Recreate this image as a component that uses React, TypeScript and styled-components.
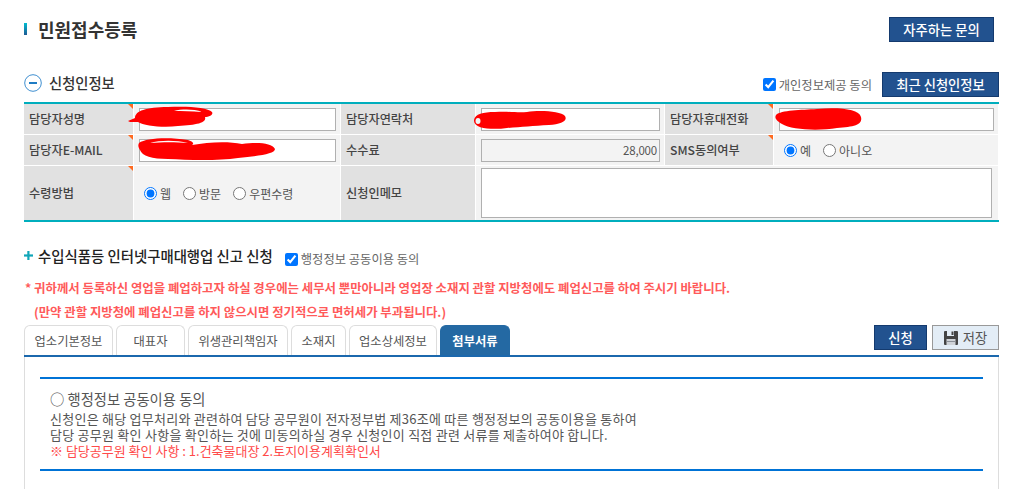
import React from "react"
import styled, { createGlobalStyle } from "styled-components"

const GlobalStyle = createGlobalStyle`
    html, body {
        margin: 0;
        padding: 0;
        background: #fff;
        overflow: hidden;
    }
    body {
        font-family: "Noto Sans CJK KR", "Noto Sans", sans-serif;
        font-size: 12px;
        color: #333;
    }
`

const Page = styled.div`
    width: 1018px;
    height: 489px;
    padding: 17px 19px 0 24px;
    box-sizing: border-box;
    overflow: hidden;
`

const TitleRow = styled.div`
    display: flex;
    justify-content: space-between;
    align-items: flex-start;
    height: 55px;
    padding-right: 5px;
`

const PageTitle = styled.h1`
    display: flex;
    align-items: center;
    column-gap: 11px;
    margin: 0;
    height: 23px;
    font-size: 18px;
    font-weight: 700;
    color: #333;

    &::before {
        content: "";
        width: 3px;
        height: 12px;
        background: linear-gradient(#00bcd0, #1f5a94);
    }
`

const NavyButton = styled.button<{ $w: number; $left?: number }>`
    width: ${(p) => p.$w}px;
    height: 25px;
    margin-left: ${(p) => p.$left ?? 0}px;
    padding: 0;
    box-sizing: border-box;
    border: 1px solid #143a6e;
    background: #22528f;
    color: #fff;
    font-family: inherit;
    font-size: 13.3px;
    font-weight: 500;
    line-height: 21px;
`

const SaveButton = styled.button`
    display: flex;
    align-items: center;
    justify-content: center;
    column-gap: 5px;
    width: 67px;
    height: 25px;
    padding: 0;
    box-sizing: border-box;
    border: 1px solid #999;
    background: #e3edf6;
    color: #555;
    font-family: inherit;
    font-size: 13.3px;
`

const SectionRow = styled.div`
    display: flex;
    align-items: center;
    height: 25px;
`

const SectionHeading = styled.div`
    display: flex;
    align-items: center;
    column-gap: 7px;
    margin-bottom: 4px;
`

const SectionTitle = styled.h2`
    margin: 0;
    font-size: 14.3px;
    font-weight: 500;
    color: #333;
`

const Agree = styled.label<{ $left?: number }>`
    display: flex;
    align-items: center;
    column-gap: 3px;
    margin-left: ${(p) => p.$left ?? 0}px;
    font-size: 12.3px;
    color: #666;
`

const ApplyAgree = styled(Agree)`
    margin-top: 4px;
`

const Check = styled.input.attrs({ type: "checkbox", defaultChecked: true })`
    width: 13px;
    height: 13px;
    margin: 0;
    accent-color: #0075ff;
`

const Spacer = styled.div`
    flex: 1;
`

const InfoGrid = styled.div`
    display: grid;
    grid-template-columns: 109px 206px 134px 188px 108px 224px;
    grid-template-rows: 30px 30px 54px;
    gap: 1px;
    margin-top: 5px;
    padding-right: 1px;
    border-top: 2px solid #00aebd;
    border-bottom: 2px solid #00aebd;
    width: 975px;
    box-sizing: border-box;
    background: #fff;
`

const Head = styled.div<{ $mark?: boolean }>`
    position: relative;
    display: flex;
    align-items: center;
    padding-left: 5px;
    background: #e1e1e1;
    font-size: 12.2px;
    font-weight: 500;
    color: #444;

    ${(p) =>
        p.$mark &&
        `&::after {
            content: "";
            position: absolute;
            top: 0;
            right: 0;
            border-top: 5px solid #ff6a20;
            border-left: 5px solid transparent;
        }`}
`

const Cell = styled.div`
    position: relative;
    display: flex;
    align-items: center;
    padding-left: 5px;
    background: #f3f3f3;
    min-width: 0;
`

const TextBox = styled.input<{ $w: number }>`
    width: ${(p) => p.$w}px;
    height: 23px;
    box-sizing: border-box;
    margin: 0;
    padding: 0 2px;
    border: 1px solid #b0b0b0;
    background: #fff;
    font-family: inherit;
    font-size: 12px;
    color: #555;

    &:read-only {
        background: #f3f3f3;
        text-align: right;
        font-size: 11.5px;
        letter-spacing: -0.2px;
    }
`

const Memo = styled.textarea`
    width: 511px;
    height: 50px;
    box-sizing: border-box;
    margin: 0;
    padding: 0;
    border: 1px solid #b0b0b0;
    background: #fff;
    resize: none;
`

const WideCell = styled(Cell)`
    grid-column: span 3;
`

const RadioGroup = styled.div<{ $pad: number }>`
    display: flex;
    align-items: center;
    column-gap: 12px;
    padding-left: ${(p) => p.$pad}px;
    font-size: 12px;
    color: #555;
`

const RadioLabel = styled.label`
    display: flex;
    align-items: center;
    column-gap: 3px;
`

const Radio = styled.input.attrs({ type: "radio" })`
    width: 13px;
    height: 13px;
    margin: 0;
    accent-color: #0075ff;
`

const Scribble = styled.svg<{ $x: number; $y: number }>`
    position: absolute;
    left: ${(p) => p.$x}px;
    top: ${(p) => p.$y}px;
    overflow: visible;
    pointer-events: none;
`

const ApplyRow = styled.div`
    display: flex;
    align-items: center;
    margin-top: 23px;
    height: 24px;
`

const ApplyHeading = styled.div`
    display: flex;
    align-items: center;
    column-gap: 5px;
    margin-bottom: 3px;
`

const ApplyTitle = styled.h2`
    margin: 0;
    font-size: 14.4px;
    font-weight: 500;
    color: #222;
`

const Notice = styled.p<{ $indent?: number }>`
    margin: 0;
    height: 24px;
    padding-left: ${(p) => p.$indent ?? 1}px;
    font-size: 12.4px;
    line-height: 24px;
    font-weight: 700;
    color: #ff5a5a;
`

const Notices = styled.div`
    margin-top: 7px;
    margin-bottom: 1px;
`

const TabBar = styled.div`
    display: flex;
    align-items: flex-start;
    height: 30px;
    border-bottom: 2px solid #1b68ad;
    width: 975px;
`

const Tab = styled.div<{ $w: number; $active?: boolean }>`
    display: flex;
    align-items: center;
    justify-content: center;
    box-sizing: border-box;
    width: ${(p) => p.$w}px;
    height: 30px;
    margin-right: 3px;
    border: 1px solid ${(p) => (p.$active ? "#2469a3" : "#ddd")};
    border-bottom: 0;
    border-radius: 6px 6px 0 0;
    background: ${(p) => (p.$active ? "#2469a3" : "#fff")};
    color: ${(p) => (p.$active ? "#fff" : "#555")};
    font-size: 12.3px;
    font-weight: ${(p) => (p.$active ? 700 : 400)};
`

const TabActions = styled.div`
    display: flex;
    column-gap: 5px;
    margin-left: auto;
`

const Panel = styled.div`
    width: 975px;
    height: 140px;
    box-sizing: border-box;
    padding: 20px 15px 0;
    border-left: 1px solid #ddd;
    border-right: 1px solid #ddd;
`

const Consent = styled.div`
    width: 943px;
    height: 94px;
    box-sizing: border-box;
    padding: 9px 10px 0;
    border-top: 2px solid #0073d6;
    border-bottom: 2px solid #0073d6;
    color: #555;
`

const ConsentTitle = styled.div`
    height: 23px;
    font-size: 14.3px;
    line-height: 22px;
`

const ConsentLine = styled.div<{ $red?: boolean }>`
    height: 16px;
    font-size: 13px;
    line-height: 16px;
    letter-spacing: ${(p) => (p.$red ? 0 : 0.25)}px;
    color: ${(p) => (p.$red ? "#ff4a4a" : "#555")};
    white-space: nowrap;
`

const MinusIcon = () => (
    <svg width="18" height="18" viewBox="0 0 18 18" aria-hidden="true">
        <circle cx="9" cy="9" r="8.3" fill="none" stroke="#3f8fd0" strokeWidth="1" />
        <rect x="5" y="8" width="8" height="2" fill="#1f7cc4" />
    </svg>
)

const PlusIcon = () => (
    <svg width="9" height="9" viewBox="0 0 9 9" aria-hidden="true">
        <rect x="3.3" y="0" width="2.2" height="9" fill="#11a6b8" />
        <rect x="0" y="3.4" width="9" height="2.2" fill="#11a6b8" />
    </svg>
)

const FloppyIcon = () => (
    <svg width="14" height="14" viewBox="0 0 14 14" aria-hidden="true">
        <rect x="0" y="0" width="14" height="14" rx="1" fill="#444" />
        <rect x="3" y="0" width="7" height="5" fill="#e3edf6" />
        <rect x="7.5" y="0.5" width="2" height="3.5" fill="#444" />
        <rect x="2.5" y="8" width="9" height="6" fill="#cfd3d8" />
        <rect x="2.5" y="10" width="9" height="1" fill="#8a8f96" />
    </svg>
)

const RED = "#ff0000"

const App = () => {
    return (
        <Page>
            <GlobalStyle />
            <TitleRow>
                <PageTitle>민원접수등록</PageTitle>
                <NavyButton $w={105}>자주하는 문의</NavyButton>
            </TitleRow>

            <SectionRow>
                <SectionHeading>
                    <MinusIcon />
                    <SectionTitle>신청인정보</SectionTitle>
                </SectionHeading>
                <Spacer />
                <Agree>
                    <Check />
                    개인정보제공 동의
                </Agree>
                <NavyButton $w={117} $left={10}>
                    최근 신청인정보
                </NavyButton>
            </SectionRow>

            <InfoGrid>
                <Head $mark>담당자성명</Head>
                <Cell>
                    <TextBox $w={197} />
                    <Scribble $x={-6} $y={2} width="86" height="22" viewBox="0 0 86 22">
                        <path
                            d="M0 15 L7 12 C7 5 18 1 40 1 C58 0 80 1 84 6 C86 9 80 11 77 11 C79 17 68 19 50 20 C36 22 16 20 10 16 L2 16 Z"
                            fill={RED}
                        />
                        <path d="M46 5 C54 3 66 3 74 6 C64 5 54 5 46 5 Z" fill="#fff" />
                    </Scribble>
                </Cell>
                <Head>담당자연락처</Head>
                <Cell>
                    <TextBox $w={179} />
                    <Scribble $x={-3} $y={6} width="94" height="20" viewBox="0 0 94 20">
                        <path
                            d="M1 10 C2 4 10 2 22 2 C36 1 44 3 54 2 C66 0 88 1 92 6 C95 11 88 14 76 15 C60 16 48 17 34 18 C20 20 0 19 1 10 Z"
                            fill={RED}
                        />
                        <ellipse cx="5" cy="11" rx="2.5" ry="3" fill="#f3f3f3" />
                    </Scribble>
                </Cell>
                <Head $mark>담당자휴대전화</Head>
                <Cell>
                    <TextBox $w={215} />
                    <Scribble $x={1} $y={4} width="87" height="22" viewBox="0 0 87 22">
                        <path
                            d="M1 7 C6 2 26 2 42 1 C64 -1 84 1 86 9 C88 17 78 19 62 20 C44 23 16 22 7 16 C2 13 -1 10 1 7 Z"
                            fill={RED}
                        />
                    </Scribble>
                </Cell>

                <Head $mark>담당자E-MAIL</Head>
                <Cell>
                    <TextBox $w={197} />
                    <Scribble $x={4} $y={3} width="138" height="22" viewBox="0 0 138 22">
                        <path
                            d="M1 5 C8 0 30 -1 50 2 C56 4 56 6 54 7 C70 4 90 3 104 6 C120 4 134 5 137 11 C137 16 120 18 100 20 C80 23 50 22 30 21 C14 21 4 18 2 12 C0 9 0 7 1 5 Z"
                            fill={RED}
                        />
                        <path d="M12 5 C22 2 38 2 50 5 C38 4 24 4 12 5 Z" fill="#fff" />
                    </Scribble>
                </Cell>
                <Head>수수료</Head>
                <Cell>
                    <TextBox $w={179} readOnly value="28,000" />
                </Cell>
                <Head $mark>SMS동의여부</Head>
                <Cell>
                    <RadioGroup $pad={5}>
                        <RadioLabel>
                            <Radio name="sms" defaultChecked />예
                        </RadioLabel>
                        <RadioLabel>
                            <Radio name="sms" />
                            아니오
                        </RadioLabel>
                    </RadioGroup>
                </Cell>

                <Head $mark>수령방법</Head>
                <Cell>
                    <RadioGroup $pad={5}>
                        <RadioLabel>
                            <Radio name="recv" defaultChecked />웹
                        </RadioLabel>
                        <RadioLabel>
                            <Radio name="recv" />
                            방문
                        </RadioLabel>
                        <RadioLabel>
                            <Radio name="recv" />
                            우편수령
                        </RadioLabel>
                    </RadioGroup>
                </Cell>
                <Head>신청인메모</Head>
                <WideCell>
                    <Memo />
                </WideCell>
            </InfoGrid>

            <ApplyRow>
                <ApplyHeading>
                    <PlusIcon />
                    <ApplyTitle>수입식품등 인터넷구매대행업 신고 신청</ApplyTitle>
                </ApplyHeading>
                <ApplyAgree $left={12}>
                    <Check />
                    행정정보 공동이용 동의
                </ApplyAgree>
            </ApplyRow>

            <Notices>
                <Notice>
                    * 귀하께서 등록하신 영업을 폐업하고자 하실 경우에는 세무서 뿐만아니라 영업장 소재지 관할 지방청에도 폐업신고를 하여 주시기 바랍니다.
                </Notice>
                <Notice $indent={10}>(만약 관할 지방청에 폐업신고를 하지 않으시면 정기적으로 면허세가 부과됩니다.)</Notice>
            </Notices>

            <TabBar>
                <Tab $w={89}>업소기본정보</Tab>
                <Tab $w={69}>대표자</Tab>
                <Tab $w={100}>위생관리책임자</Tab>
                <Tab $w={55}>소재지</Tab>
                <Tab $w={88}>업소상세정보</Tab>
                <Tab $w={70} $active>
                    첨부서류
                </Tab>
                <TabActions>
                    <NavyButton $w={53}>신청</NavyButton>
                    <SaveButton>
                        <FloppyIcon />
                        저장
                    </SaveButton>
                </TabActions>
            </TabBar>

            <Panel>
                <Consent>
                    <ConsentTitle>○ 행정정보 공동이용 동의</ConsentTitle>
                    <ConsentLine>신청인은 해당 업무처리와 관련하여 담당 공무원이 전자정부법 제36조에 따른 행정정보의 공동이용을 통하여</ConsentLine>
                    <ConsentLine>담당 공무원 확인 사항을 확인하는 것에 미동의하실 경우 신청인이 직접 관련 서류를 제출하여야 합니다.</ConsentLine>
                    <ConsentLine $red>※ 담당공무원 확인 사항 : 1.건축물대장 2.토지이용계획확인서</ConsentLine>
                </Consent>
            </Panel>
        </Page>
    )
}

export default App
